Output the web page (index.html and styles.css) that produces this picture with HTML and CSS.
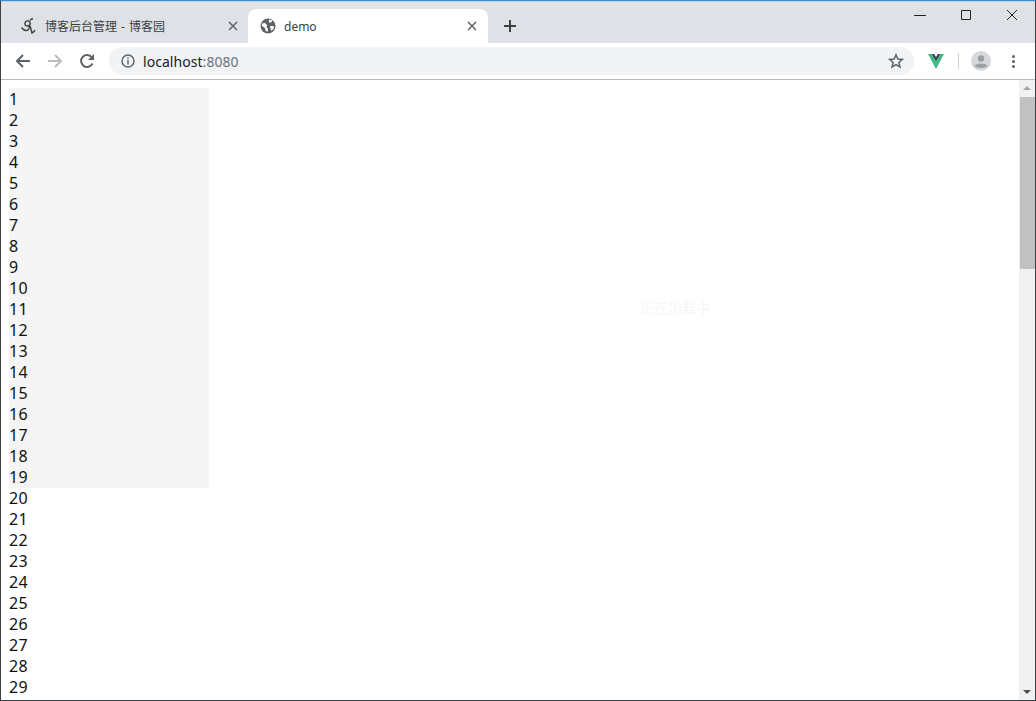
FILE: index.html
```html
<!DOCTYPE html>
<html>
<head lang="en">
    <meta charset="UTF-8">
    <title>demo</title>
    <link rel="stylesheet" href="styles.css">
</head>
<body>
<div class="window">
    <div class="tabstrip">
        <div class="tab">
            <svg class="favicon" width="18" height="18" viewBox="0 0 18 18"><path d="M1.500 10.500C3 12.500 5 14 7 13.500C9 13 9.500 10.500 9 8.500C6.500 9.500 4.500 8.500 5 6C5.500 3.500 9 3 10 5.500C10.500 7 10 8 9 8.500M10 3L13 1.500M10 9C11 11.500 11.500 13.500 12 16C13.500 15.500 14.500 14.500 15 13" fill="none" stroke="#444" stroke-width="1.500"/></svg>
            <span class="tab-title">博客后台管理 - 博客园</span>
            <svg class="tab-close" width="10" height="10" viewBox="0 0 10 10"><path d="M1 1L9 9M9 1L1 9" stroke="#5f6368" stroke-width="1.500"/></svg>
        </div>
        <div class="tab current">
            <svg class="favicon" width="16" height="16" viewBox="0 0 16 16"><circle cx="8" cy="8" r="7.500" fill="#5f6368"/><path d="M2 5.500L5 5 7 7 6.500 9 8 11 7.500 14 5.500 12.500 5 10 2 8ZM9 1.500L12.500 2.500 11 4.500 9 4.500ZM10 8L13.500 8 14 10 11.500 13 10.500 10.500Z" fill="#fff"/></svg>
            <span class="tab-title">demo</span>
            <svg class="tab-close" width="10" height="10" viewBox="0 0 10 10"><path d="M1 1L9 9M9 1L1 9" stroke="#5f6368" stroke-width="1.500"/></svg>
        </div>
        <svg class="new-tab" width="12" height="12" viewBox="0 0 12 12"><path d="M6 0V12M0 6H12" stroke="#3c4043" stroke-width="2"/></svg>
        <div class="win-btns">
            <svg width="12" height="12" viewBox="0 0 12 12"><path d="M0 6.500H12" stroke="#222"/></svg>
            <svg width="12" height="12" viewBox="0 0 12 12"><path d="M1.500 1.500H10.500V10.500H1.500Z" fill="none" stroke="#222"/></svg>
            <svg width="12" height="12" viewBox="0 0 12 12"><path d="M1 1L11 11M11 1L1 11" stroke="#222"/></svg>
        </div>
    </div>
    <div class="toolbar">
        <svg class="nav" width="16" height="16" viewBox="0 0 16 16"><path d="M15 8H2M8 2L2 8 8 14" fill="none" stroke="#5f6368" stroke-width="2"/></svg>
        <svg class="nav" width="16" height="16" viewBox="0 0 16 16"><path d="M1 8H14M8 2L14 8 8 14" fill="none" stroke="#b9bbbe" stroke-width="2"/></svg>
        <svg class="nav" width="16" height="16" viewBox="0 0 16 16"><path d="M13.500 10.500A6 6 0 1 1 13 4.500" fill="none" stroke="#5f6368" stroke-width="2"/><path d="M15 1V7H9Z" fill="#5f6368"/></svg>
        <div class="omnibox">
            <svg width="14" height="14" viewBox="0 0 14 14"><circle cx="7" cy="7" r="6" fill="none" stroke="#5f6368" stroke-width="1.400"/><path d="M7 6V10.500M7 3.500V5" stroke="#5f6368" stroke-width="1.500"/></svg>
            <span class="url">localhost<span class="port">:8080</span></span>
            <svg class="star" width="16" height="16" viewBox="0 0 16 16"><path d="M8 1.800L9.800 6 14.400 6.400 10.900 9.400 12 13.900 8 11.500 4 13.900 5.100 9.400 1.600 6.400 6.200 6Z" fill="none" stroke="#5f6368" stroke-width="1.500"/></svg>
        </div>
        <svg class="vue" width="16" height="15" viewBox="0 0 16 15"><path d="M0 0H3.500L8 7.500 12.500 0H16L8 15Z" fill="#42b883"/><path d="M3.500 0H6.200L8 3 9.800 0H12.500L8 7.500Z" fill="#35495e"/></svg>
        <div class="sep"></div>
        <svg class="avatar" width="20" height="20" viewBox="0 0 20 20"><circle cx="10" cy="10" r="10" fill="#d5d7da"/><circle cx="10" cy="7.500" r="3.200" fill="#9b9ea3"/><path d="M3.500 15C5 11.500 15 11.500 16.500 15 14.500 17.500 5.500 17.500 3.500 15Z" fill="#9b9ea3"/></svg>
        <div class="menu"><i></i><i></i><i></i></div>
    </div>
    <div class="viewport">
        <div class="page">
            <div class="aside">
                <div>1</div><div>2</div><div>3</div><div>4</div><div>5</div><div>6</div>
                <div>7</div><div>8</div><div>9</div><div>10</div><div>11</div><div>12</div>
                <div>13</div><div>14</div><div>15</div><div>16</div><div>17</div><div>18</div>
                <div>19</div><div>20</div><div>21</div><div>22</div><div>23</div><div>24</div>
                <div>25</div><div>26</div><div>27</div><div>28</div><div>29</div>
            </div>
            <div class="ghost">正在加载中</div>
        </div>
        <div class="scrollbar">
            <div class="arrow up"></div>
            <div class="track"><div class="thumb"></div></div>
            <div class="arrow down"></div>
        </div>
    </div>
</div>
</body>
</html>
```

FILE: styles.css
```css
* {margin: 0; padding: 0; box-sizing: border-box;}
html, body {height: 100%; overflow: hidden;}
body {background: #fff;}
svg {display: block; flex: none;}

.window {
    height: 701px;
    display: flex;
    flex-direction: column;
    border: 1px solid #3c4043;
    border-top: 1px solid #3b8ed0;
    font-family: "Noto Sans", "Noto Sans CJK SC", sans-serif;
}

/* tabs */
.tabstrip {
    height: 42px;
    padding: 8px 0 0 7px;
    display: flex;
    align-items: stretch;
    background: linear-gradient(#b5d3ea 1px, #e4e2e3 1px, #e4e2e3 7px, #dee1e6 7px);
    position: relative;
}
.tab {
    width: 240px;
    padding: 0 10px 0 12px;
    display: flex;
    align-items: center;
    font-size: 12px;
    color: #3c4043;
}
.tab.current {
    background: #fff;
    border-radius: 8px 8px 0 0;
    padding-right: 11px;
}
.tab-title {flex: 1; margin-left: 7px; word-spacing: 1px;}
.tab.current .tab-title {margin-left: 8px;}
.new-tab {align-self: center; margin-left: 16px;}
.win-btns {
    position: absolute;
    top: 8px;
    right: 0;
    display: flex;
    gap: 34px;
    padding-right: 17px;
}

/* toolbar */
.toolbar {
    height: 37px;
    padding: 0 0 0 14px;
    display: flex;
    align-items: center;
    background: #fff;
    border-bottom: 1px solid #b6b9bd;
}
.nav {margin-right: 16px;}
.omnibox {
    flex: 1;
    height: 28px;
    margin-left: -2px;
    padding: 0 10px 0 12px;
    display: flex;
    align-items: center;
    background: #f1f3f4;
    border-radius: 14px;
}
.url {flex: 1; margin-left: 8px; font-size: 14px; color: #202124; letter-spacing: 0.05px;}
.port {color: #6f7276;}
.vue {margin-left: 14px;}
.sep {width: 1px; height: 16px; margin-left: 14px; background: #d0d2d5;}
.avatar {margin-left: 12px;}
.menu {
    width: 3px;
    margin: 0 20px 0 21px;
    display: flex;
    flex-direction: column;
    gap: 2px;
}
.menu i {width: 3px; height: 3px; border-radius: 50%; background: #5f6368;}

/* page */
.viewport {
    flex: 1;
    min-height: 0;
    display: flex;
    overflow: hidden;
}
.page {flex: 1; padding-top: 8px; padding-left: 8px; position: relative;}
.aside {
    width: 200px;
    height: 400px;
    padding-top: 1px;
    background: #f5f5f5;
    font-size: 16px;
    line-height: 21px;
    letter-spacing: 0.4px;
    color: #111;
}
.ghost {
    position: absolute;
    left: 639px;
    top: 217px;
    font-size: 14px;
    color: #f6f6f6;
}

/* scrollbar */
.scrollbar {
    width: 16px;
    display: flex;
    flex-direction: column;
    background: #f1f1f1;
}
.arrow {height: 17px; position: relative;}
.arrow:after {
    content: "";
    position: absolute;
    left: 4px;
    border-left: 4px solid transparent;
    border-right: 4px solid transparent;
}
.arrow.up:after {top: 6px; border-bottom: 4px solid #a3a3a3;}
.arrow.down:after {top: 7px; border-top: 4px solid #505050;}
.track {flex: 1; padding-left: 1px;}
.thumb {height: 172px; background: #c1c1c1;}
```
